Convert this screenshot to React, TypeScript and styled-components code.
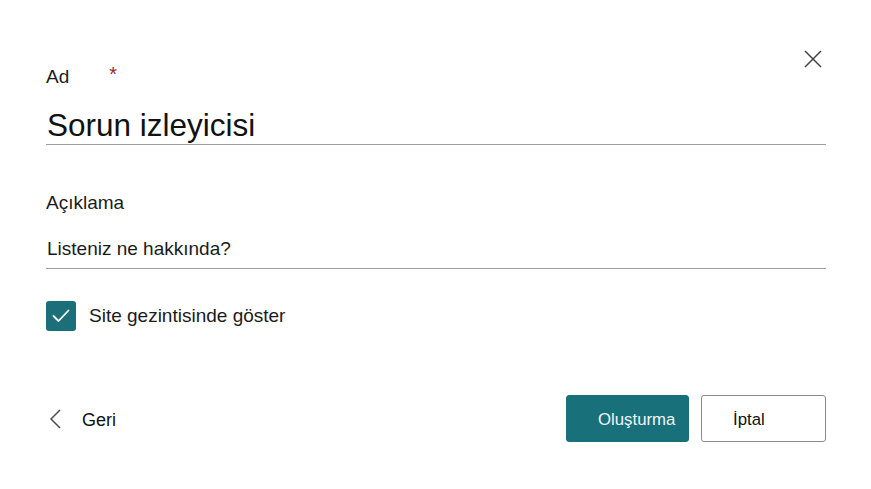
import styled, { createGlobalStyle } from 'styled-components';

const GlobalStyle = createGlobalStyle`
    html, body {
        margin: 0;
        padding: 0;
        background: #ffffff;
    }

    body {
        font-family: 'Liberation Sans', Arial, sans-serif;
        color: #1b1b1b;
    }
`;

const Panel = styled.div`
    width: 871px;
    height: 489px;
    box-sizing: border-box;
    padding: 65px 45px 0 46px;
    display: flex;
    flex-direction: column;
    position: relative;
    background: #fff;
`;

const CloseButton = styled.button`
    position: absolute;
    top: 45px;
    right: 44px;
    width: 28px;
    height: 28px;
    padding: 0;
    border: none;
    background: transparent;
    display: flex;
    align-items: center;
    justify-content: center;
    cursor: pointer;
`;

const Label = styled.label<{ $gap?: number }>`
    display: flex;
    align-items: flex-start;
    font-size: 19px;
    line-height: 24px;
    height: 24px;
    color: #1b1b1b;
    margin-bottom: ${({ $gap }) => $gap ?? 15}px;
`;

const Required = styled.span`
    color: #a4262c;
    margin-left: 40px;
    margin-top: -3px;
    font-size: 20px;
`;

const TextField = styled.input<{ $large?: boolean }>`
    display: block;
    width: 100%;
    box-sizing: border-box;
    height: ${({ $large }) => ($large ? 38 : 39)}px;
    padding: 0 0 0 1px;
    margin: 0;
    border: none;
    border-bottom: 1px solid #9f9f9f;
    outline: none;
    background: transparent;
    font-family: 'Liberation Sans', Arial, sans-serif;
    font-size: ${({ $large }) => ($large ? 31.5 : 19)}px;
    color: #111;

    &::placeholder {
        color: #1b1b1b;
        opacity: 1;
    }
`;

const Section = styled.div<{ $top: number }>`
    margin-top: ${({ $top }) => $top}px;
`;

const CheckRow = styled.label`
    display: flex;
    align-items: center;
    gap: 13px;
    margin-top: 32px;
    font-size: 19px;
    color: #1b1b1b;
    cursor: pointer;
`;

const CheckBox = styled.span`
    width: 30px;
    height: 30px;
    border-radius: 3px;
    background: #1a6f78;
    display: flex;
    align-items: center;
    justify-content: center;
    flex-shrink: 0;
`;

const Footer = styled.div`
    display: flex;
    align-items: center;
    justify-content: space-between;
    margin-top: 64px;
`;

const BackButton = styled.button`
    display: flex;
    align-items: center;
    gap: 21px;
    padding: 0 0 0 4px;
    border: none;
    background: transparent;
    font-family: 'Liberation Sans', Arial, sans-serif;
    font-size: 18px;
    color: #111;
    cursor: pointer;

    span {
        padding-top: 4px;
    }
`;

const Actions = styled.div`
    display: flex;
    gap: 12px;
`;

const ActionButton = styled.button<{ $primary?: boolean }>`
    width: ${({ $primary }) => ($primary ? 123 : 125)}px;
    height: 47px;
    box-sizing: border-box;
    padding: 2px 0 0 31px;
    text-align: left;
    border-radius: 3px;
    font-family: 'Liberation Sans', Arial, sans-serif;
    font-size: 16.8px;
    cursor: pointer;
    background: ${({ $primary }) => ($primary ? '#18707a' : '#ffffff')};
    color: ${({ $primary }) => ($primary ? '#eef6f7' : '#111111')};
    border: 1px solid ${({ $primary }) => ($primary ? '#18707a' : '#8a8a8a')};
`;

const App = () => {
    return (
        <>
            <GlobalStyle />
            <Panel>
                <CloseButton aria-label="Kapat">
                    <svg width="18" height="18" viewBox="0 0 18 18">
                        <path d="M1 1 L17 17 M17 1 L1 17" stroke="#424242" strokeWidth="1.5" fill="none" />
                    </svg>
                </CloseButton>

                <Label $gap={18}>
                    Ad<Required>*</Required>
                </Label>
                <TextField $large defaultValue="Sorun izleyicisi" />

                <Section $top={46}>
                    <Label>Açıklama</Label>
                    <TextField placeholder="Listeniz ne hakkında?" />
                </Section>

                <CheckRow>
                    <CheckBox>
                        <svg width="18" height="14" viewBox="0 0 18 14">
                            <path d="M1.5 7 L6.5 12 L16.5 1.5" stroke="#ffffff" strokeWidth="1.8" fill="none" strokeLinecap="round" strokeLinejoin="round" />
                        </svg>
                    </CheckBox>
                    Site gezintisinde göster
                </CheckRow>

                <Footer>
                    <BackButton>
                        <svg width="11" height="20" viewBox="0 0 11 20">
                            <path d="M10 1 L1 10 L10 19" stroke="#4a4a4a" strokeWidth="1.5" fill="none" />
                        </svg>
                        <span>Geri</span>
                    </BackButton>
                    <Actions>
                        <ActionButton $primary>Oluşturma</ActionButton>
                        <ActionButton>İptal</ActionButton>
                    </Actions>
                </Footer>
            </Panel>
        </>
    );
};

export default App;
